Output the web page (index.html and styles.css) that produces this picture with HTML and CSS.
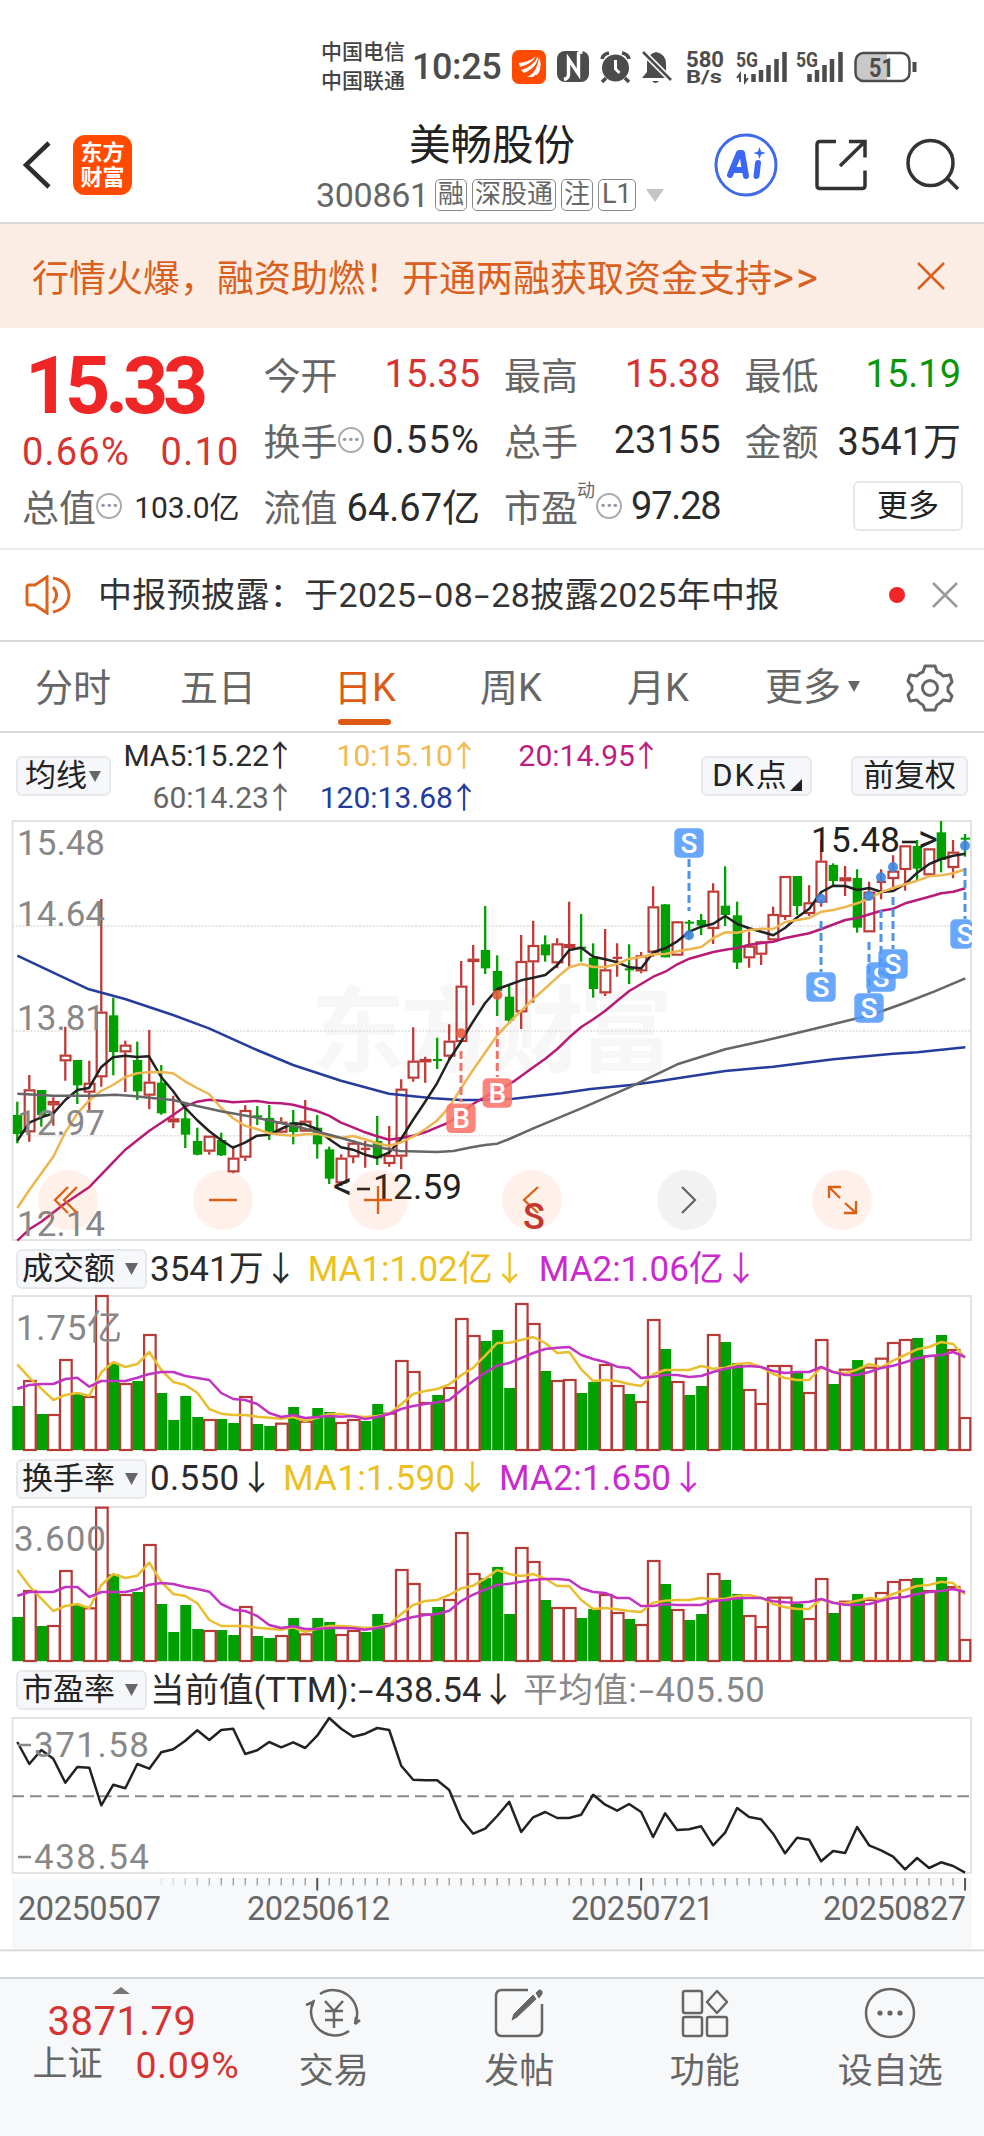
FILE: index.html
```html
<!DOCTYPE html>
<html lang="zh-CN">
<head>
<meta charset="utf-8">
<title>美畅股份 300861</title>
<link rel="stylesheet" href="styles.css">
</head>
<body>
<div class="status">
  <div class="carriers"><span>中国电信</span><span>中国联通</span></div>
  <div class="clock">10:25</div>
  <svg class="st-icons" width="420" height="44" viewBox="506 45 420 44">
    <rect x="512" y="50" width="34" height="34" rx="7" fill="#ff4a00"/>
    <path d="M519 63q10-1 17-7q-4 8-16 11zM521 70q12-3 17-14q0 11-14 17zM527 77q10-4 12-20q4 12-6 20zM535 75q5-6 5-16q2 11-3 16z" fill="#fff"/>
    <rect x="557" y="51" width="32" height="31" rx="8" fill="#4c4c4c"/>
    <path d="M564 79.500q4.500-1 4.500-5V59l10 15V54q0-2 4-2" fill="none" stroke="#fff" stroke-width="3.400"/>
    <circle cx="615.500" cy="68" r="13.500" fill="#4c4c4c"/>
    <path d="M602 59q1-5 7-6M629 59q-1-5-7-6M606 78l-4 4M625 78l4 4" stroke="#4c4c4c" stroke-width="3.500" fill="none"/>
    <path d="M615.500 60v9l4 4" stroke="#fff" stroke-width="3" fill="none"/>
    <path d="M642 78l5-6V64q0-10 9-12q10 2 10 12v8l5 6zM652 81h7q-3.500 4-7 0z" fill="#4c4c4c"/>
    <path d="M643 52l28 28" stroke="#fff" stroke-width="6"/><path d="M643 52l28 28" stroke="#4c4c4c" stroke-width="2.500"/>
    <g class="st-text"><text x="686" y="66.500" font-size="21.500" textLength="38" lengthAdjust="spacingAndGlyphs">580</text><text x="686" y="83" font-size="19" textLength="36" lengthAdjust="spacingAndGlyphs">B/s</text>
    <text x="736" y="66.500" font-size="20" textLength="22" lengthAdjust="spacingAndGlyphs">5G</text><text x="796" y="66.500" font-size="20" textLength="22" lengthAdjust="spacingAndGlyphs">5G</text></g>
    <path d="M740 82v-8l-3 4M745 74v8l3-4" stroke="#4c4c4c" stroke-width="2" fill="none"/>
    <path d="M753.500 74v8M761 70v12M768.500 65v17M776.500 59v23M784.500 52v30M809.500 74v8M817 70v12M824.500 65v17M832 59v23M840.500 52v30" stroke="#4c4c4c" stroke-width="4.500"/>
    <path d="M863 54h24v26h-24q-7 0-7-7v-12q0-7 7-7z" fill="#c9c9c9"/>
    <rect x="855.500" y="53" width="54" height="28" rx="8" fill="none" stroke="#4c4c4c" stroke-width="2.500"/>
    <path d="M914.500 62v10" stroke="#4c4c4c" stroke-width="4"/>
    <text class="st-text" x="869" y="76.500" font-size="26" textLength="25" lengthAdjust="spacingAndGlyphs">51</text>
  </svg>
</div>

<header class="head">
  <svg class="back" width="30" height="50" viewBox="0 0 30 50"><path d="M27 3L4 25l23 22" fill="none" stroke="#2e2e2e" stroke-width="4.500"/></svg>
  <div class="logo"><span>东方</span><span>财富</span></div>
  <div class="titles">
    <h1>美畅股份</h1>
    <div class="code"><span class="num">300861</span><i>融</i><i>深股通</i><i>注</i><i class="l1">L1</i><svg width="18" height="13" viewBox="0 0 18 13"><path d="M0 0h18l-9 13z" fill="#c4c4c4"/></svg></div>
  </div>
  <svg class="tools" width="250" height="70" viewBox="710 130 250 70">
    <circle cx="746" cy="165" r="30" fill="none" stroke="#3f6be8" stroke-width="3"/>
    <g fill="none" stroke="#3a68f5" stroke-width="6" stroke-linecap="round" stroke-linejoin="round"><path d="M730 175l9-22h3l4 23M734 170h10M758 163l-1.500 13"/></g>
    <path d="M759.500 147l1.500 4.500 4.500 1.500-4.500 1.500-1.500 4.500-1.500-4.500-4.500-1.500 4.500-1.500z" fill="#3a68f5"/>
    <path d="M836 141.500h-16q-3 0-3 3v41q0 3 3 3h42q3 0 3-3v-15M849 141.500h16v16M864.500 142L840 166" fill="none" stroke="#333" stroke-width="3.500"/>
    <circle cx="930.500" cy="163" r="22.500" fill="none" stroke="#333" stroke-width="3.500"/><path d="M947 178l11 11" stroke="#333" stroke-width="3.500"/>
  </svg>
</header>

<div class="banner"><span>行情火爆，融资助燃！开通两融获取资金支持<span class="gt">&gt;&gt;</span></span>
  <svg width="30" height="30" viewBox="0 0 30 30"><path d="M2 2l26 26M28 2L2 28" stroke="#d9601e" stroke-width="2.500"/></svg></div>

<section class="quote">
  <div class="col c1">
    <div class="price">15.33</div>
    <div class="chg"><span class="wide">0.66%</span><span class="wide">0.10</span></div>
    <div class="cell"><b>总值</b><em class="dots">···</em><span class="val small">103.0亿</span></div>
  </div>
  <div class="col">
    <div class="cell"><b>今开</b><span class="val red">15.35</span></div>
    <div class="cell"><b>换手</b><em class="dots">···</em><span class="val wide">0.55%</span></div>
    <div class="cell up"><b>流值</b><span class="val">64.67亿</span></div>
  </div>
  <div class="col">
    <div class="cell"><b>最高</b><span class="val red">15.38</span></div>
    <div class="cell"><b>总手</b><span class="val">23155</span></div>
    <div class="cell"><b>市盈</b><sup>动</sup><em class="dots">···</em><span class="val tight">97.28</span></div>
  </div>
  <div class="col">
    <div class="cell"><b>最低</b><span class="val green">15.19</span></div>
    <div class="cell up"><b>金额</b><span class="val">3541万</span></div>
    <div class="cell"><button class="more">更多</button></div>
  </div>
</section>

<div class="notice">
  <svg width="46" height="40" viewBox="0 0 46 40"><path d="M2 12q0-2 2-2h6l12-8v36l-12-8H4q-2 0-2-2zM28 12q7 8 0 16M28 3q15 3 16 17q-1 14-16 17" fill="none" stroke="#dc6420" stroke-width="3"/></svg>
  <p>中报预披露：于2025<s>-</s>08<s>-</s>28披露2025年中报</p>
  <span class="reddot"></span>
  <svg width="26" height="26" viewBox="0 0 26 26"><path d="M1 1l24 24M25 1L1 25" stroke="#999" stroke-width="2.500"/></svg>
</div>

<nav class="tabs">
  <span>分时</span><span>五日</span><span class="on">日K</span><span>周K</span><span>月K</span><span class="tm">更多<svg width="12" height="11" viewBox="0 0 12 11"><path d="M0 0h12l-6 11z" fill="#666"/></svg></span>
  <svg class="gear" width="48" height="48" viewBox="-24 -24 48 48"><path d="M-5-22H5L7-16Q11-15 13-12L20-13L22-6L18-1V3L22 8L20 13L13 12Q11 15 7 17L5 22H-5L-7 17Q-11 15-13 12L-20 13L-22 7L-18 2V-2L-22-7L-20-13L-13-12Q-11-15-7-16Z" fill="none" stroke="#666" stroke-width="3" stroke-linejoin="round"/><circle r="7.500" fill="none" stroke="#666" stroke-width="3"/></svg>
</nav>

<section class="ma">
  <button class="pick avg">均线<svg width="12" height="11" viewBox="0 0 12 11"><path d="M0 0h12l-6 11z" fill="#666"/></svg></button>
  <div class="ma-grid">
    <span class="k">MA5:15.22<u>↑</u></span><span class="y">10:15.10<u>↑</u></span><span class="m">20:14.95<u>↑</u></span>
    <span class="g">60:14.23<u>↑</u></span><span class="b">120:13.68<u>↑</u></span>
  </div>
  <button class="pick dk"><span>DK点</span><svg width="12" height="12" viewBox="0 0 12 12"><path d="M12 0v12H0z" fill="#222"/></svg></button>
  <button class="pick fq">前复权</button>
</section>

<svg id="kline" class="plot" width="984" height="422" viewBox="0 820 984 422"></svg>
<div class="legend l1st"><button class="pick">成交额<svg width="13" height="12" viewBox="0 0 12 11"><path d="M0 0h12l-6 11z" fill="#666"/></svg></button><span class="k">3541万<u>↓</u></span><span class="gold">MA1:1.02亿<u>↓</u></span><span class="pur">MA2:1.06亿<u>↓</u></span></div>
<svg id="amount" class="plot" width="984" height="156" viewBox="0 1295 984 156"></svg>
<div class="legend l2"><button class="pick">换手率<svg width="13" height="12" viewBox="0 0 12 11"><path d="M0 0h12l-6 11z" fill="#666"/></svg></button><span class="k">0.550<u>↓</u></span><span class="gold">MA1:1.590<u>↓</u></span><span class="pur">MA2:1.650<u>↓</u></span></div>
<svg id="turnover" class="plot" width="984" height="156" viewBox="0 1506 984 156"></svg>
<div class="legend l3"><button class="pick">市盈率<svg width="13" height="12" viewBox="0 0 12 11"><path d="M0 0h12l-6 11z" fill="#666"/></svg></button><span class="k">当前值(TTM):<s>-</s>438.54<u>↓</u></span><span class="avgv">平均值:<s>-</s>405.50</span></div>
<svg id="pe" class="plot" width="984" height="158" viewBox="0 1717 984 158"></svg>
<svg id="axis" class="plot" width="984" height="76" viewBox="0 1875 984 76"></svg>

<footer class="bar">
  <div class="index">
    <svg width="18" height="7" viewBox="0 0 18 7"><path d="M9 0l9 7H0z" fill="#777"/></svg>
    <strong>3871.79</strong>
    <div><span>上证</span><span class="pct">0.09%</span></div>
  </div>
  <div class="item"><svg width="60" height="54" viewBox="-30 -27 60 54"><path d="M-14-19A24 24 0 0 1 21 11L26 7M15 18A24 24 0 0 1-21-11L-28-8M21 11L22 4M-22-6L-20-13M-9-12L0-2L9-12M0-2V15M-9-2H9M-9 7H9" fill="none" stroke="#666" stroke-width="2.500"/></svg><span>交易</span></div>
  <div class="item"><svg width="54" height="54" viewBox="-27 -27 54 54"><path d="M9-23H-17Q-23-23-23-17V17Q-23 23-17 23H17Q23 23 23 17V-9" fill="none" stroke="#666" stroke-width="2.500"/><path d="M-7 7L-5 1L14-18L17-14L-2 4ZM17-20L20-23Q24-23 23-19L20-15Z" fill="#666" stroke="#666"/></svg><span>发帖</span></div>
  <div class="item"><svg width="54" height="54" viewBox="-27 -27 54 54"><g fill="none" stroke="#666" stroke-width="2.500" stroke-linejoin="round"><rect x="-22" y="-22" width="19" height="22" rx="2"/><rect x="-22" y="4" width="19" height="19" rx="2"/><rect x="2" y="4" width="20" height="19" rx="2"/><path d="M12-22L22-11L12 0L2-11Z"/></g></svg><span>功能</span></div>
  <div class="item"><svg width="54" height="54" viewBox="-27 -27 54 54"><circle r="24" fill="none" stroke="#666" stroke-width="2.500"/><circle cx="-10" r="2.600" fill="#666"/><circle r="2.600" fill="#666"/><circle cx="10" r="2.600" fill="#666"/></svg><span>设自选</span></div>
</footer>
<script src="charts.js"></script>
</body>
</html>
```
FILE: styles.css
```css
* { box-sizing: border-box; }
body { margin: 0; width: 984px; height: 2136px; overflow: hidden; background: #fff; color: #2b2b2b; font-family: Roboto, "Noto Sans CJK SC", sans-serif; display: flex; flex-direction: column; }
body > * { flex: none; }
svg { display: block; }
s { text-decoration: none; display: inline-block; width: 18px; text-align: center; transform: scaleX(1.6); }
u { text-decoration: none; }
button { font: inherit; color: #222; padding: 0; }

.status { height: 100px; display: flex; align-items: flex-start; padding: 38px 0 0 321px; color: #4c4c4c; }
.carriers { width: 91px; display: flex; flex-direction: column; font-size: 21px; line-height: 29px; font-weight: 500; color: #444; }
.clock { width: 94px; font-size: 36px; line-height: 58px; font-weight: 500; letter-spacing: -.4px; }
.st-icons { margin-top: 7px; }
.st-text { fill: #4c4c4c; font-weight: 700; font-family: Roboto, sans-serif; }

.head { height: 124px; border-bottom: 2px solid #d9d9d9; display: flex; padding: 0 24px 0 22px; }
.back { margin-top: 40px; }
.logo { margin: 35px 0 0 21px; width: 59px; height: 60px; border-radius: 12px; background: #ff4a00; color: #fff; font-size: 22px; font-weight: 700; line-height: 25px; text-align: center; display: flex; flex-direction: column; justify-content: center; }
.titles { flex: 1; margin-left: 184px; }
.titles h1 { margin: 16px 0 0 93px; font-size: 41.500px; font-weight: 400; line-height: 60px; color: #222; white-space: nowrap; }
.code { display: flex; align-items: center; gap: 5px; height: 38px; color: #666; }
.code .num { font-size: 34px; width: 114px; letter-spacing: -.3px; }
.code i { font-style: normal; font-size: 26px; line-height: 29px; height: 32px; border: 1.500px solid #888; border-radius: 5px; padding: 0 2px; }
.code .l1 { font-size: 27px; padding: 0 3px; }
.code svg { margin-left: 5px; }
.tools { margin-top: 30px; }

.banner { height: 104px; background: #fcede4; color: #d9601e; font-size: 37px; display: flex; align-items: center; justify-content: space-between; padding: 0 38px 0 32px; }
.gt { font-size: 42px; letter-spacing: 2px; line-height: 40px; }

.quote { height: 222px; border-bottom: 2px solid #ebebeb; display: flex; padding: 13px 23px 0 22px; gap: 24px; }
.col { width: 217px; display: flex; flex-direction: column; }
.c1 { width: 218px; }
.cell { height: 66px; display: flex; align-items: center; white-space: nowrap; }
.cell b { font-weight: 400; font-size: 37px; color: #666; }
.val { margin-left: auto; font-size: 38px; }
.up .val { margin-top: -4px; }
.val.small { font-size: 30px; margin-top: -2px; }
.wide { letter-spacing: 1.200px; }
.tight { letter-spacing: -1.200px; }
.red { color: #d63333; } .green { color: #0b970b; }
.dots { font-style: normal; width: 26px; height: 26px; border: 2px solid #aaa; border-radius: 50%; color: #999; font-size: 22px; line-height: 21px; text-align: center; font-weight: 700; letter-spacing: -.500px; }
sup { font-size: 18px; color: #666; align-self: flex-start; line-height: 20px; margin: 8px 1px 0 -1px; }
.price { height: 84px; line-height: 90px; font-size: 79px; font-weight: 700; color: #f02525; letter-spacing: -5.200px; padding-left: 3px; }
.chg { height: 48px; line-height: 54px; display: flex; justify-content: space-between; font-size: 38px; color: #d63333; }
.more { margin: 0 -2px 0 auto; width: 110px; height: 50px; border: 2px solid #e6e8ea; border-radius: 6px; background: #fff; font-size: 31px; line-height: 44px; }

.notice { height: 92px; border-bottom: 2px solid #d9d9d9; display: flex; align-items: center; padding: 0 26px 0 25px; }
.notice p { margin: -6px 0 0 27px; font-size: 34px; width: 791px; letter-spacing: .35px; color: #333; white-space: nowrap; }
.reddot { width: 16px; height: 16px; border-radius: 50%; background: #f02525; margin-right: 27px; }

.tabs { height: 91px; border-bottom: 2px solid #d9d9d9; display: flex; font-size: 38px; line-height: 92px; color: #666; padding-left: 35px; }
.tabs span { width: 145px; position: relative; }
.tabs span:nth-child(2) { width: 154px; }
.tabs span:nth-child(3) { width: 146px; }
.tabs span:nth-child(4) { width: 147px; }
.tabs span:nth-child(5) { width: 138px; }
.tabs .on { color: #dc5a14; }
.tabs .on::after { content: ""; position: absolute; left: 4px; bottom: 6px; width: 53px; height: 6px; border-radius: 3px; background: #dc5a14; }
.tabs .tm { display: flex; align-items: center; gap: 7px; width: 141px; }
.gear { margin-top: 22px; }

.pick { border: 2px solid #e6e8ec; border-radius: 6px; background: #f6f7fa; height: 40px; font-size: 31px; line-height: 34px; display: flex; align-items: center; white-space: nowrap; }
.ma { height: 87px; display: flex; padding: 0 16px; }
.ma .pick { margin-top: 23px; }
.avg { width: 95px; padding-left: 7px; gap: 2px; }
.dk { width: 111px; padding-left: 9px; gap: 2px; }
.dk span { letter-spacing: 1.800px; }
.dk svg { align-self: flex-end; margin-bottom: 3px; }
.fq { margin-left: 39px; width: 117px; padding-left: 10px; }
.ma-grid { width: 591px; display: grid; grid-template-columns: 180px 184px 182px; grid-template-rows: 42px 42px; font-size: 30px; line-height: 46px; text-align: right; white-space: nowrap; }
.ma-grid u { display: inline-block; width: 22px; font-size: 30px; font-family: "Noto Sans CJK SC", sans-serif; line-height: 30px; text-indent: -4px; }
.k { color: #2b2b2b; } .y { color: #f3ba4d; } .m { color: #c01c80; } .g { color: #666; } .b { color: #243c9c; }
.gold { color: #edc021; } .pur { color: #c92bcf; } .avgv { color: #888; }

.legend { height: 53px; display: flex; align-items: center; padding-left: 16px; font-size: 35px; white-space: nowrap; }
.legend .pick { width: 131px; padding-left: 4px; gap: 10px; margin-right: 3px; }
.legend span { margin-right: 10px; }
.legend u { display: inline-block; width: 34px; font-size: 34px; line-height: 34px; font-family: "Noto Sans CJK SC", sans-serif; letter-spacing: 0; }
.l1st span { margin-top: -7px; }
.l1st .gold { margin-right: 12px; }
.legend.l2, .legend.l3 { height: 55px; }
.l2 span { letter-spacing: .3px; margin-right: 9.500px; }
.l3 span { margin-top: -5px; font-size: 34.500px; margin-right: 8px; }
.l3 .avgv { letter-spacing: .600px; }
.plot { overflow: visible; }
.plot text { font-family: Roboto, "Noto Sans CJK SC", sans-serif; }

.bar { margin-top: 26px; height: 159px; background: #f7f8fa; border-top: 2px solid #d3d8da; display: flex; color: #666; }
.index { width: 241px; display: flex; flex-direction: column; align-items: center; padding-top: 8px; }
.index strong { font-size: 40px; font-weight: 400; color: #d63333; line-height: 50px; margin: 3px 0 0 3px; letter-spacing: .500px; }
.index div { width: 207px; display: flex; justify-content: space-between; align-items: center; font-size: 35px; line-height: 36px; margin-left: 31px; }
.index .pct { color: #d63333; font-size: 37.500px; letter-spacing: .7px; }
.item { width: 185.500px; display: flex; flex-direction: column; align-items: center; padding-top: 7px; font-size: 35px; line-height: 46px; }
.item span { margin-top: 9px; }
```
FILE: charts.js
```js
const RED = '#be3a37', GREEN = '#00a000', X = i => 17.3 + 11.997 * i;
const el = (tag, a, txt) => {
  const attrs = Object.entries(a).map(([k, v]) => `${k}="${v}"`).join(' ');
  return `<${tag} ${attrs}>${txt || ''}</${tag}>`;
};
const rect = (x, y, w, h, fill, extra) => el('rect', { x, y, width: w, height: h, fill, ...extra });
const line = (pts, stroke, w = 2.5) => el('polyline', { points: pts.map(p => p.map(n => n.toFixed(1)).join(',')).join(' '), fill: 'none', stroke, 'stroke-width': w, 'stroke-linejoin': 'round' });
const text = (x, y, s, len, size = 35, fill = '#888', extra = {}) => el('text', { x, y, 'font-size': size, fill, textLength: len, ...extra }, s);
const frame = (y1, y2) => rect(12.5, y1, 958.5, y2 - y1, 'none', { stroke: '#e3e3e3', 'stroke-width': 2 });
const parse = s => s.trim().split(/[\s,]+/).map(Number);

/* Candles: high, body top, body bottom, low, in thirds of a pixel below y=810 */
const upDays = new Set([1,3,4,6,7,9,11,13,16,18,19,22,24,27,28,29,31,32,33,34,36,37,38,42,43,45,46,49,50,52,53,55,58,61,62,63,64,66,67,69,71,72,73,74,76,78]);
const candles = parse(`875 915 972 1000 795 838 967 995 840 840 915 950 862 873 886 947 650 734 754 812 750 750 826 882 752 818 848 900
267 605 802 830 563 616 726 796 692 704 727 846 695 750 844 870 660 815 857 898 765 818 910 914 857 925 937 955 880 925 974 1014
953 993 1034 1036 977 977 1025 1034 968 990 1036 1038 1007 1043 1087 1090 886 900 1043 1053 888 916 922 945 885 924 965 990
922 935 968 970 900 937 966 1003 870 932 965 965 915 953 1003 1046 1010 1018 1106 1122 1033 1043 1120 1128 990 998 1042 1060
993 1013 1020 1073 918 993 1045 1065 948 1035 1062 1070 808 836 1040 1078 652 752 806 815 740 747 757 818 683 747 753 777
643 692 740 750 453 527 696 696 405 446 456 586 288 420 475 492 436 483 543 618 525 560 632 640 375 453 607 657 332 405 457 578
376 403 436 455 385 400 460 475 275 402 414 470 312 410 415 455 400 443 537 563 357 478 550 558 400 440 447 500 403 475 480 522
426 436 484 490 229 289 428 440 283 283 442 442 334 334 437 437 330 335 340 385 312 330 347 375 220 242 357 402 169 287 315 348
275 316 458 477 365 407 445 473 392 394 434 465 290 312 391 391 198 198 321 330 198 198 288 315 226 277 312 318 90 152 278 290
160 165 213 225 168 202 214 258 178 204 353 368 215 245 367 367 178 212 219 268 136 182 207 232 106 106 180 242 90 108 176 210
115 115 196 196 33 67 150 187 90 125 174 205 72 83 88 140`);

/* Moving averages: x,y pairs; the second list continues on the right half */
const R = n => n + 1452;
const maLine = (left, right, color) => {
  const pts = [];
  const a = parse(left), b = parse(right);
  for (let i = 0; i < a.length; i += 2) pts.push([a[i] / 3, 810 + a[i + 1] / 3]);
  for (let i = 0; i < b.length; i += 2) pts.push([R(b[i]) / 3, 810 + b[i + 1] / 3]);
  return line(pts, color);
};

function drawKline() {
  let h = '';
  h += text(311, 1065, '东方财富', 362, 94, '#f7f7f7', { 'font-weight': 700 });
  for (const y of [926, 1031, 1135.7]) h += el('path', { d: `M12.500 ${y}H971`, stroke: '#dedede', 'stroke-width': 1.5, 'stroke-dasharray': '2 1.500' });
  h += frame(821, 1240);
  for (let i = 0; i < 80; i++) {
    const [hi, t, b, lo] = candles.slice(i * 4, i * 4 + 4).map(v => 810 + v / 3);
    const x = X(i), up = upDays.has(i), c = up ? RED : GREEN;
    h += el('path', { d: up ? `M${x} ${hi}V${t}M${x} ${b}V${lo}` : `M${x} ${hi}V${lo}`, stroke: c, 'stroke-width': 2.3 });
    h += up && b - t > 3 ? rect(x - 4.6, t + 1, 9.8, b - t - 2, 'none', { stroke: c, 'stroke-width': 2.2 }) : rect(x - 4.4, t, 9.4, Math.max(b - t, 2), c);
  }
  h += maLine('52,437 160,488 267,538 375,567 519,615 627,655 771,720 879,765 1023,812 1167,851 1240,859 1300,865 1383,870 1440,870', '40,868 88,866 232,850 320,837 440,825 508,816 600,802 724,783 868,770 1048,748 1228,731 1300,727 1444,712', '#243c9c');
  h += maLine('52,1292 88,1258 124,1235 196,1180 267,1132 339,1057 375,1020 447,963 519,915 555,890 591,875 627,869 663,872 699,877 771,873 807,878 843,880 879,884 951,903 987,917 1023,938 1059,952 1095,967 1131,979 1167,989 1203,984 1239,977 1275,967 1311,952 1347,937 1383,910 1419,882', '4,860 40,842 88,815 148,772 184,746 220,717 256,682 292,651 328,628 364,602 400,572 436,543 508,500 544,485 580,463 616,446 688,426 724,419 760,414 796,404 868,395 904,384 976,370 1012,357 1084,330 1120,324 1192,302 1228,296 1264,280 1336,260 1372,250 1408,245 1444,235', '#b81a78');
  h += maLine('52,992 88,938 124,922 160,910 196,870 232,840 267,834 303,772 339,742 375,737 411,741 447,739 483,800 519,843 555,893 591,930 627,963 663,990 699,1013 735,998 771,977 807,974 843,957 879,940 915,943 951,957 987,987 1023,1012 1059,1019 1095,1034 1131,1043 1167,1028 1203,987 1239,930 1275,876 1311,820 1347,750 1383,695 1419,635 1455,580', '40,537 76,524 112,511 148,503 184,495 220,465 256,420 292,413 328,440 364,448 400,457 436,472 472,475 508,427 544,415 580,394 616,365 652,350 688,341 724,318 760,342 796,355 832,365 868,376 904,353 940,322 976,296 1012,246 1048,227 1084,228 1120,240 1156,234 1192,246 1228,243 1264,222 1300,188 1336,162 1372,147 1408,137 1444,131', '#222');
  h += maLine('52,1194 88,1140 160,1040 196,967 232,910 267,872 303,843 339,825 375,802 411,790 447,787 483,786 519,790 555,814 591,834 627,852 663,893 699,925 735,947 771,957 807,970 843,974 879,977 915,973 951,971 987,980 1023,984 1059,978 1095,988 1131,1000 1167,1008 1203,997 1239,980 1275,958 1311,932 1347,892 1383,835 1419,780 1455,728', '40,676 76,637 112,602 148,567 184,535 220,502 256,472 292,462 328,471 364,471 400,462 436,446 472,441 508,433 544,432 580,424 616,418 652,411 688,384 724,367 760,368 796,360 832,356 868,357 904,336 940,330 976,324 1012,305 1048,300 1084,291 1120,280 1156,265 1192,246 1228,234 1264,223 1300,212 1336,199 1372,196 1408,190 1444,178', '#edb650');
  h += maLine('52,851 160,857 280,857 345,854 400,858 447,863 519,870 591,888 663,904 771,923 879,947 1000,977 1095,1004 1167,1018 1200,1023 1311,1026 1360,1023 1419,1011 1455,1005', '40,1001 76,987 148,955 292,895 436,832 580,763 652,740 724,718 820,697 904,677 976,660 1120,625 1170,612 1264,578 1350,545 1444,505', '#666');
  [['15.48', 854.5], ['14.64', 925.5], ['13.81', 1030], ['12.97', 1135], ['12.14', 1236]].forEach(([s, y]) => h += text(17, y, s, 88));
  h += text(333, 1199.3, '&lt;', 21, 38, '#222') + el('path', { d: 'M357 1189H370', stroke: '#222', 'stroke-width': 2.6 }) + text(373, 1199.3, '12.59', 89, 35, '#222');
  h += text(811, 852, '15.48', 89, 35, '#222') + el('path', { d: 'M902 842H916', stroke: '#222', 'stroke-width': 2.6 }) + text(918, 852, '&gt;', 21, 38, '#222');

  const blue = '#4f93e8', coral = '#ef7367';
  const signal = (s, x, y, y1, y2, dotY) => {
    const c = s === 'B' ? coral : blue;
    h += el('path', { d: `M${x} ${y1}V${y2}`, stroke: c, 'stroke-width': 3, 'stroke-dasharray': '8 4' });
    h += el('circle', { cx: x, cy: dotY, r: 5, fill: s === 'B' ? '#ea5a3c' : '#3f86e0', 'fill-opacity': .9 });
    const w = Math.min(29.4, 972 - x + 14.7);
    h += rect(x - 14.7, y - 14.7, w, 29.4, s === 'B' ? '#fa7468' : '#539bfa', { rx: 5, 'fill-opacity': .88 });
    h += el('text', { x, y: y + 10, 'font-size': 28, fill: '#fff', 'text-anchor': 'middle', 'font-weight': 500 }, s);
  };
  signal('B', 461, 1118.3, 1051, 1102, 1033.3);
  signal('B', 497.3, 1093, 1027, 1077, 995);
  signal('S', 689, 843, 859, 911, 935.3);
  signal('S', 821, 987, 921, 972, 898.7);
  signal('S', 869, 1008, 942, 993, 896);
  signal('S', 881, 977, 910, 962, 877.3);
  signal('S', 893, 964, 897, 949, 867);
  signal('S', 965, 934, 868, 919, 845.7);

  [68, 223, 378, 532, 687, 842].forEach((x, i) => h += el('circle', { cx: x, cy: 1200, r: 30, fill: i === 4 ? '#000' : '#ff5a00', 'fill-opacity': i === 4 ? .05 : .085 }));
  h += el('path', { d: 'M68 1187L55 1200L68 1213M77 1187L64 1200L77 1213M209 1200H237M364 1200H392M378 1186V1214M538 1187L524 1200L538 1213M829 1198V1187H841M829 1187L840 1198M845 1203L856 1213M856 1201V1213H844', fill: 'none', stroke: '#dc6014', 'stroke-width': 2.3 });
  h += el('path', { d: 'M682 1187L695 1200L682 1213', fill: 'none', stroke: '#666', 'stroke-width': 2.3 });
  h += text(523, 1229, 'S', 21, 36, '#c43730', { 'font-weight': 500 });
  document.getElementById('kline').innerHTML = h;
}

const upBars = new Set([1,3,4,6,7,9,11,16,19,22,24,27,28,31,32,33,34,36,37,38,42,43,45,46,49,50,52,53,55,58,61,62,63,64,66,67,69,71,72,73,74,76,78,79]);
function drawBars(id, top, bottom, label, labelX, labelY, len, bars, fast, slow) {
  const Y = v => 1240 + v / 3;
  let h = frame(top, bottom), greens = '', reds = '';
  parse(bars).forEach((v, i) => {
    const x = X(i);
    if (upBars.has(i)) reds += rect(x - 5.2, Y(v), Math.min(11.6, 970.3 - x + 5.2), bottom - Y(v), '#fff', { stroke: '#b73a37', 'stroke-width': 2.2 });
    else greens += rect(x - 5, Y(v), 11, bottom - Y(v), GREEN);
  });
  h += greens + reds;
  h += line(parse(fast).map((v, i) => [X(i), Y(v)]), '#e9bf2e');
  h += line(parse(slow).map((v, i) => [X(i), Y(v)]), '#c233c4');
  h += text(labelX, labelY, label, len);
  document.getElementById(id).innerHTML = h;
}

function drawPe() {
  const v = parse(`246 312 270 296 368 321 323 436 374 385 312 326 277 268 242 211 240 210 206 282 271 246 262 247 264 227 174 206 230 221 204 210 317 359 361 361 390 477 521 506 468 425 516 472 456 474 474 464 404 434 452 432 456 531 460 510 508 499 556 518 444 471 478 521 580 533 539 604 573 579 501 556 571 590 628 594 624 607 618 638`);
  let h = frame(1718, 1873);
  h += el('path', { d: 'M12.500 1796.300H971', stroke: '#888', 'stroke-width': 2, 'stroke-dasharray': '11.500 6' });
  h += line(v.map((n, i) => [X(i), 1660 + n / 3]), '#222');
  h += el('path', { d: 'M18 1745H31M18 1857H31', stroke: '#888', 'stroke-width': 2.6 });
  h += text(34, 1756.5, '371.58', 115) + text(34, 1868.5, '438.54', 115);
  document.getElementById('pe').innerHTML = h;
}

function drawAxis() {
  let h = rect(12, 1878, 960, 72, '#f7f8fa') + rect(0, 1949.5, 984, 1.8, '#d9d9d9');
  for (let i = 12; i < 80; i++) {
    const major = (i - 25) % 27 === 0;
    h += el('path', { d: `M${X(i)} 1878V${major ? 1890.5 : 1885.5}`, stroke: major ? '#555' : '#999', 'stroke-width': major ? 2 : 1.3, opacity: Math.min(1, (i - 11) / 6) });
  }
  [['20250507', 18], ['20250612', 247], ['20250721', 571], ['20250827', 823]].forEach(([s, x]) => h += text(x, 1919.5, s, 143, 32.5, '#666'));
  document.getElementById('axis').innerHTML = h;
}

drawKline();
drawBars('amount', 1296, 1450, '1.75亿', 16, 1339.5, 106,
  `498 423 522 525 360 460 471 168 370 432 423 285 459 540 468 531 540 537 549 471 552 558 551 501 545 504 516 549 540 543 492 521 363 396 489 465 444 237 288 303 270 444 192 252 393 423 420 459 426 375 438 462 486 240 327 426 465 438 285 306 369 450 492 378 378 398 459 300 432 389 360 383 356 309 300 294 348 285 330 534`,
  `373,413,446,480,465,459,467,397,366,381,372,336,390,426,435,458,507,521,525,525,530,533,536,531,543,533,522,522,528,531,528,522,493,462,453,447,433,406,383,347,309,308,300,291,309,339,336,388,423,420,423,432,438,403,390,390,390,378,386,383,372,369,381,402,414,420,420,382,396,400,389,372,382,362,345,328,321,306,312,354`,
  `446,435,432,432,417,413,440,423,423,423,413,402,396,396,408,414,420,459,477,480,492,519,531,525,534,531,528,530,528,537,531,522,507,498,492,487,480,451,423,398,377,369,354,339,327,323,321,345,357,366,380,384,414,410,405,405,411,408,396,386,381,378,381,393,399,396,396,381,396,405,405,396,384,377,367,355,348,345,336,351`);
drawBars('turnover', 1507, 1661, '3.600', 14, 1550.5, 92,
  `1131 1053 1158 1158 993 1095 1105 803 1003 1065 1056 915 1092 1176 1095 1167 1173 1170 1185 1101 1188 1194 1188 1134 1183 1134 1146 1185 1173 1176 1122 1152 990 1032 1123 1101 1080 879 1002 1014 981 1122 924 966 1080 1104 1104 1134 1107 1065 1119 1137 1155 963 1032 1110 1140 1122 1002 1020 1062 1128 1161 1073 1073 1092 1137 1017 1119 1085 1062 1080 1059 1026 1020 1014 1053 1011 1041 1200`,
  `990,1038,1076,1113,1098,1092,1104,1035,1002,1014,1007,968,1026,1062,1068,1090,1140,1158,1158,1158,1163,1166,1169,1162,1176,1166,1158,1158,1160,1164,1162,1154,1122,1095,1083,1080,1065,1045,1037,1016,990,1002,1008,1002,1016,1038,1038,1080,1107,1104,1108,1113,1116,1088,1082,1080,1080,1074,1078,1076,1068,1065,1073,1092,1102,1107,1107,1078,1088,1090,1082,1074,1078,1062,1050,1038,1035,1025,1029,1063`,
  `1067,1056,1056,1056,1041,1041,1071,1056,1056,1056,1048,1034,1029,1032,1041,1047,1055,1092,1109,1113,1128,1155,1164,1159,1167,1167,1164,1164,1165,1169,1164,1157,1140,1131,1125,1122,1112,1083,1064,1049,1035,1031,1025,1020,1017,1017,1020,1045,1056,1059,1074,1074,1098,1098,1093,1095,1095,1095,1083,1080,1075,1074,1074,1084,1087,1088,1085,1077,1088,1094,1095,1092,1082,1074,1071,1062,1056,1053,1047,1056`);
drawPe();
drawAxis();
```
